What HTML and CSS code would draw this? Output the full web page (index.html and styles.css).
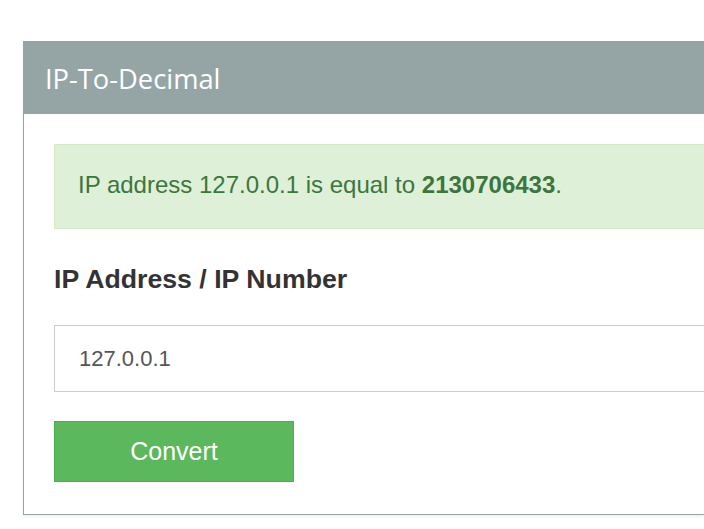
FILE: index.html
```html
<!DOCTYPE html>
<html>
<head>
<meta charset="utf-8">
<title>IP-To-Decimal</title>
<link rel="stylesheet" href="styles.css">
</head>
<body>
<div class="page">
  <div class="panel">
    <div class="panel-heading">IP-To-Decimal</div>
    <div class="panel-body">
      <div class="alert">IP address 127.0.0.1 is equal to <strong>2130706433</strong>.</div>
      <label class="field-label" for="ip">IP Address / IP Number</label>
      <input class="field-input" id="ip" type="text" value="127.0.0.1">
      <button class="btn-convert" type="button">Convert</button>
    </div>
  </div>
</div>
</body>
</html>
```

FILE: styles.css
```css
html, body {
  margin: 0;
  padding: 0;
  overflow: hidden;
  background: #ffffff;
}
body {
  font-family: "Liberation Sans", Arial, sans-serif;
  width: 704px;
  height: 529px;
}
.page {
  padding: 41px 0 0 23px;
}
.panel {
  border: 1px solid #95a5a6;
  border-right: none;
  box-shadow: 0 2px 3px rgba(0, 0, 0, 0.06);
  background: #ffffff;
}
.panel-heading {
  background: #95a5a6;
  color: #ffffff;
  font-family: "Open Sans", sans-serif;
  font-size: 27.3px;
  height: 72px;
  display: flex;
  align-items: center;
  padding-left: 21px;
  margin-top: -1px;
  padding-top: 1px;
}
.panel-body {
  padding: 30px 0 32px 30px;
  display: flex;
  flex-direction: column;
  align-items: flex-start;
}
.alert {
  align-self: stretch;
  background: #dff0d8;
  border: 1px solid #d6e9c6;
  border-right: none;
  color: #3c763d;
  font-size: 24px;
  line-height: 28px;
  padding: 26px 23px 29px 23px;
  margin-bottom: 34px;
}
.alert strong {
  font-weight: bold;
}
.field-label {
  display: block;
  font-weight: bold;
  color: #333333;
  font-size: 26.7px;
  line-height: 32px;
  margin-bottom: 30px;
}
.field-input {
  align-self: stretch;
  box-sizing: border-box;
  height: 67px;
  border: 1px solid #cccccc;
  border-right: none;
  padding: 0 24px;
  font-family: "Liberation Sans", Arial, sans-serif;
  font-size: 22px;
  color: #555555;
  margin: 0 0 29px 0;
  outline: none;
}
.btn-convert {
  box-sizing: border-box;
  width: 240px;
  height: 61px;
  background: #5cb85c;
  border: 1px solid #4cae4c;
  color: #ffffff;
  font-family: "Liberation Sans", Arial, sans-serif;
  font-size: 25px;
  padding: 0;
  margin: 0;
  cursor: pointer;
}
```
